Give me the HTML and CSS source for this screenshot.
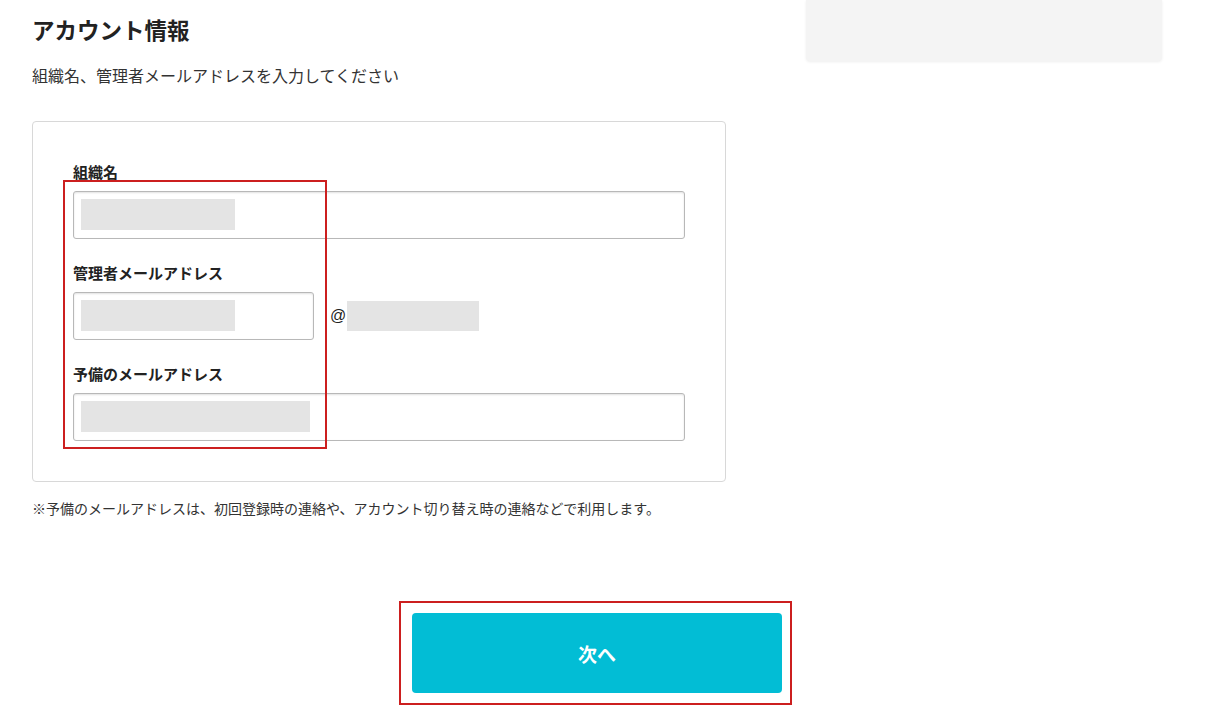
FILE: index.html
```html
<!DOCTYPE html>
<html lang="ja">
<head>
<meta charset="utf-8">
<link rel="stylesheet" href="styles.css">
</head>
<body>
<div class="page">
  <div class="top">
    <main class="main">
      <h1 class="title">アカウント情報</h1>
      <p class="lead">組織名、管理者メールアドレスを入力してください</p>
      <div class="card">
        <div class="group">
          <label class="label">組織名</label>
          <div class="input wide"><span class="mask m1"></span></div>
        </div>
        <div class="group">
          <label class="label">管理者メールアドレス</label>
          <div class="row">
            <div class="input short"><span class="mask m1"></span></div>
            <span class="at">@</span>
            <span class="mask m2"></span>
          </div>
        </div>
        <div class="group">
          <label class="label">予備のメールアドレス</label>
          <div class="input wide"><span class="mask m3"></span></div>
        </div>
      </div>
      <p class="note">※予備のメールアドレスは、初回登録時の連絡や、アカウント切り替え時の連絡などで利用します。</p>
    </main>
    <aside class="side"></aside>
  </div>
  <div class="actions">
    <button class="next">次へ</button>
  </div>
  <div class="mark mark-fields"></div>
  <div class="mark mark-button"></div>
</div>
</body>
</html>
```

FILE: styles.css
```css
* { box-sizing: border-box; }
html, body { margin: 0; padding: 0; background: #fff; }
body {
  font-family: "Noto Sans CJK JP", "Noto Sans", sans-serif;
  color: #222;
  width: 1205px;
  height: 715px;
  overflow: hidden;
}
.page { position: relative; }
.top { display: flex; align-items: flex-start; }
.main { width: 694px; margin-left: 32px; }
.side {
  width: 356px;
  height: 61px;
  margin-left: 80px;
  background: #f4f4f4;
  border-radius: 0 0 4px 4px;
  box-shadow: 0 1px 3px rgba(0,0,0,0.07);
}
.title {
  margin: 14px 0 0;
  font-size: 22.5px;
  line-height: 30px;
  font-weight: 700;
  color: #222;
}
.lead {
  margin: 20px 0 0;
  font-size: 16px;
  line-height: 22px;
  color: #333;
}
.card {
  margin-top: 35px;
  border: 1px solid #d8d8d8;
  border-radius: 4px;
  padding: 40px;
}
.group + .group { margin-top: 24px; }
.label {
  display: block;
  font-size: 15px;
  line-height: 20px;
  font-weight: 700;
  color: #222;
  margin-bottom: 9px;
}
.input {
  height: 48px;
  border: 1px solid #b8b8b8;
  border-radius: 3px;
  box-shadow: inset 0 1px 2px rgba(0,0,0,0.12);
  padding: 7px;
  background: #fff;
}
.wide { width: 100%; }
.short { width: 241px; }
.mask { display: block; background: #e4e4e4; height: 31px; }
.m1 { width: 154px; }
.m3 { width: 229px; }
.row { display: flex; align-items: center; }
.at {
  margin-left: 16px;
  font-size: 16px;
  line-height: 20px;
  color: #222;
  font-family: "Liberation Sans", sans-serif;
}
.m2 { width: 132px; height: 30px; margin-left: 1px; }
.note {
  margin: 16px 0 0;
  font-size: 14px;
  line-height: 20px;
  color: #333;
}
.actions { padding-left: 412px; margin-top: 95px; }
.next {
  display: block;
  width: 370px;
  height: 80px;
  border: 0;
  border-radius: 4px;
  background: #02bdd5;
  color: #fff;
  font-family: "Noto Sans CJK JP", sans-serif;
  font-size: 19px;
  font-weight: 700;
}
.mark { position: absolute; border: 2px solid #cc1f1f; }
.mark-fields { left: 63px; top: 180px; width: 264px; height: 269px; }
.mark-button { left: 399px; top: 601px; width: 393px; height: 104px; }
```
